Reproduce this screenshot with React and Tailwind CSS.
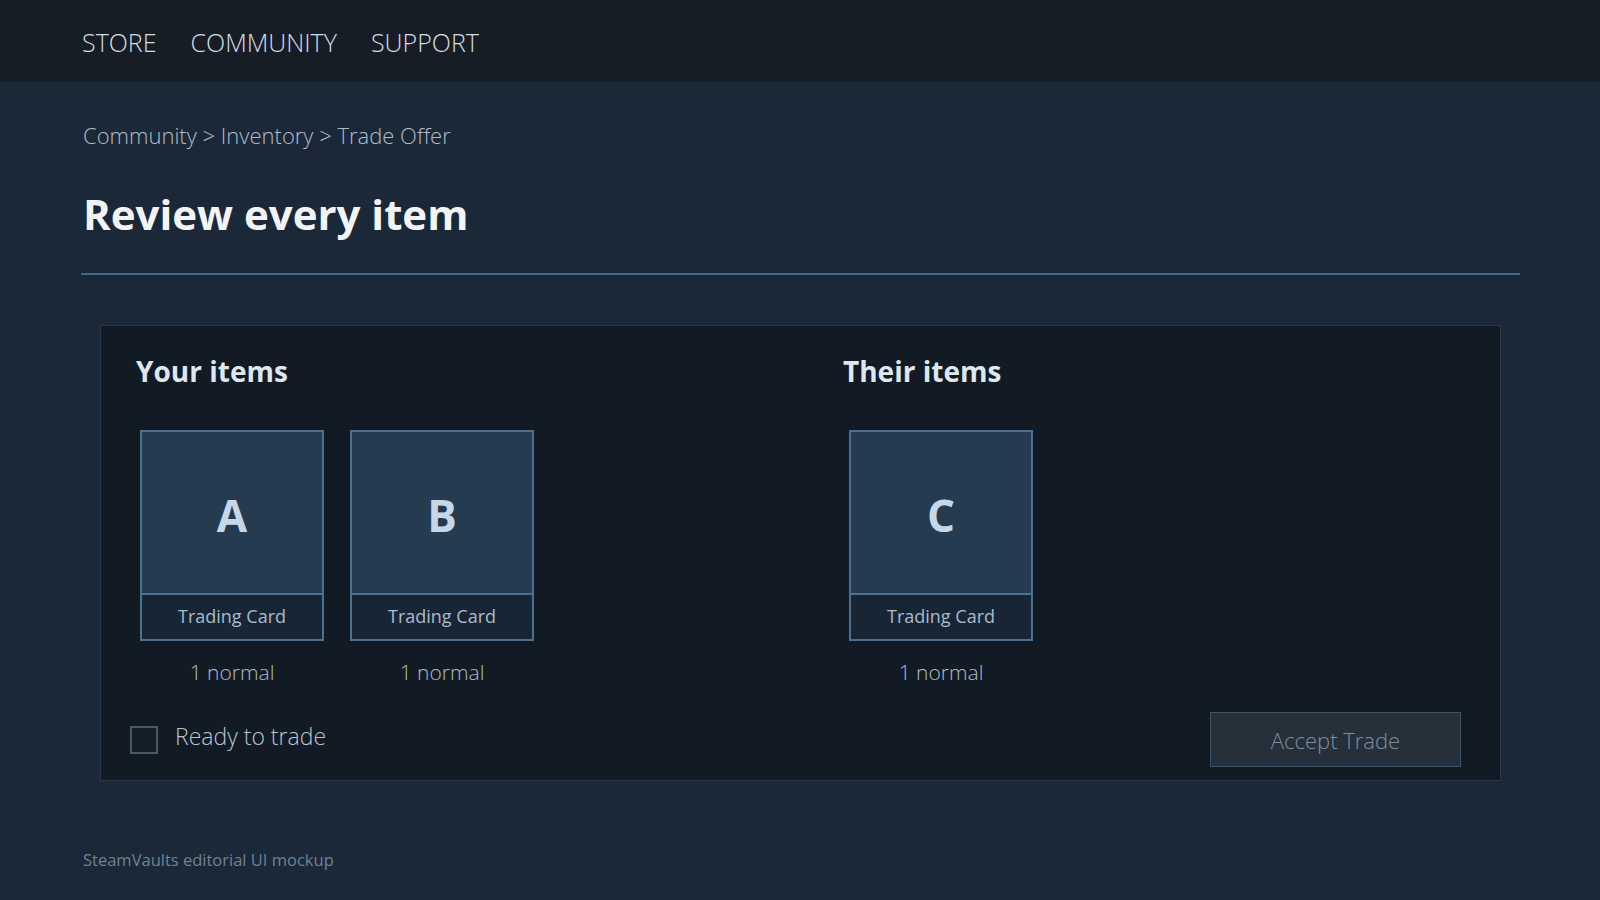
const yourItems = [
  { id: 'a', letter: 'A', type: 'Trading Card', qty: '1 normal' },
  { id: 'b', letter: 'B', type: 'Trading Card', qty: '1 normal' },
]

const theirItems = [
  { id: 'c', letter: 'C', type: 'Trading Card', qty: '1 normal' },
]

function ItemCard({ item }) {
  return (
    <div className="flex flex-col items-center w-[184px]">
      <div className="w-[184px] border-2 border-[#4a7192] bg-[#172535]">
        <div className="h-[161px] bg-[#253b50] flex items-center justify-center pt-[4px]">
          <span className="text-[44px] leading-none font-bold text-[#c6d8e8]">{item.letter}</span>
        </div>
        <div className="h-[46px] border-t-2 border-[#4a7192] flex items-center justify-center pb-[3px]">
          <span className="text-[18px] leading-none text-[#a9bccb]">{item.type}</span>
        </div>
      </div>
      <span className="mt-[21px] text-[21px] leading-none font-light text-[#aebccb]">{item.qty}</span>
    </div>
  )
}

function ItemColumn({ title, items, offset }) {
  return (
    <div>
      <h2 className="text-[28px] leading-none font-bold text-[#dce7f0]">{title}</h2>
      <div className={`mt-[45px] flex gap-[26px] ${offset}`}>
        {items.map(item => (
          <ItemCard key={item.id} item={item} />
        ))}
      </div>
    </div>
  )
}

export default function App() {
  return (
    <div className="min-h-screen bg-[#1b2838]" style={{ fontFamily: '"Open Sans", "Noto Sans", sans-serif' }}>
      {/* Top nav */}
      <nav className="h-[82px] bg-[#171d25] pl-[82px] flex items-center pt-[2px] gap-[34px]">
        <a className="text-[25px] leading-none font-light text-[#d3dce4]">STORE</a>
        <a className="text-[25px] leading-none font-light text-[#d3dce4]">COMMUNITY</a>
        <a className="text-[25px] leading-none font-light text-[#d3dce4]">SUPPORT</a>
      </nav>

      <div className="pl-[81px] pr-[80px]">
        <div className="pt-[42px] pl-[2px] text-[22px] leading-none font-light text-[#b0bdc9]">
          Community &gt; Inventory &gt; Trade Offer
        </div>

        <h1 className="mt-[47px] pl-[2px] text-[42px] leading-none font-bold text-[#f2f4f6]">Review every item</h1>

        <div className="mt-[38px] h-[2px] bg-[#3f6a8c]" />

        {/* Trade panel */}
        <div className="mt-[50px] mx-[19px] border border-[#2a3847] bg-[#121a23] pl-[35px] pr-[39px] pt-[31px] pb-[13px]">
          <div className="grid grid-cols-[707px_1fr]">
            <ItemColumn title="Your items" items={yourItems} offset="ml-[4px]" />
            <ItemColumn title="Their items" items={theirItems} offset="ml-[6px]" />
          </div>

          <div className="mt-[29px] flex items-center justify-between">
            <label className="flex items-center gap-[17px] -ml-[6px]">
              <span className="w-[28px] h-[28px] border-2 border-[#4b5966] bg-[#161f29]" />
              <span className="mb-[7px] text-[23px] leading-none font-light text-[#b9c6d1]">Ready to trade</span>
            </label>
            <button className="w-[251px] h-[55px] bg-[#25303b] border border-[#3c5266] text-[22px] leading-none font-light text-[#7e8e9b]">
              Accept Trade
            </button>
          </div>
        </div>

        <footer className="mt-[71px] pl-[2px] pb-[20px] text-[16.5px] leading-none text-[#6f8194]">
          SteamVaults editorial UI mockup
        </footer>
      </div>
    </div>
  )
}
